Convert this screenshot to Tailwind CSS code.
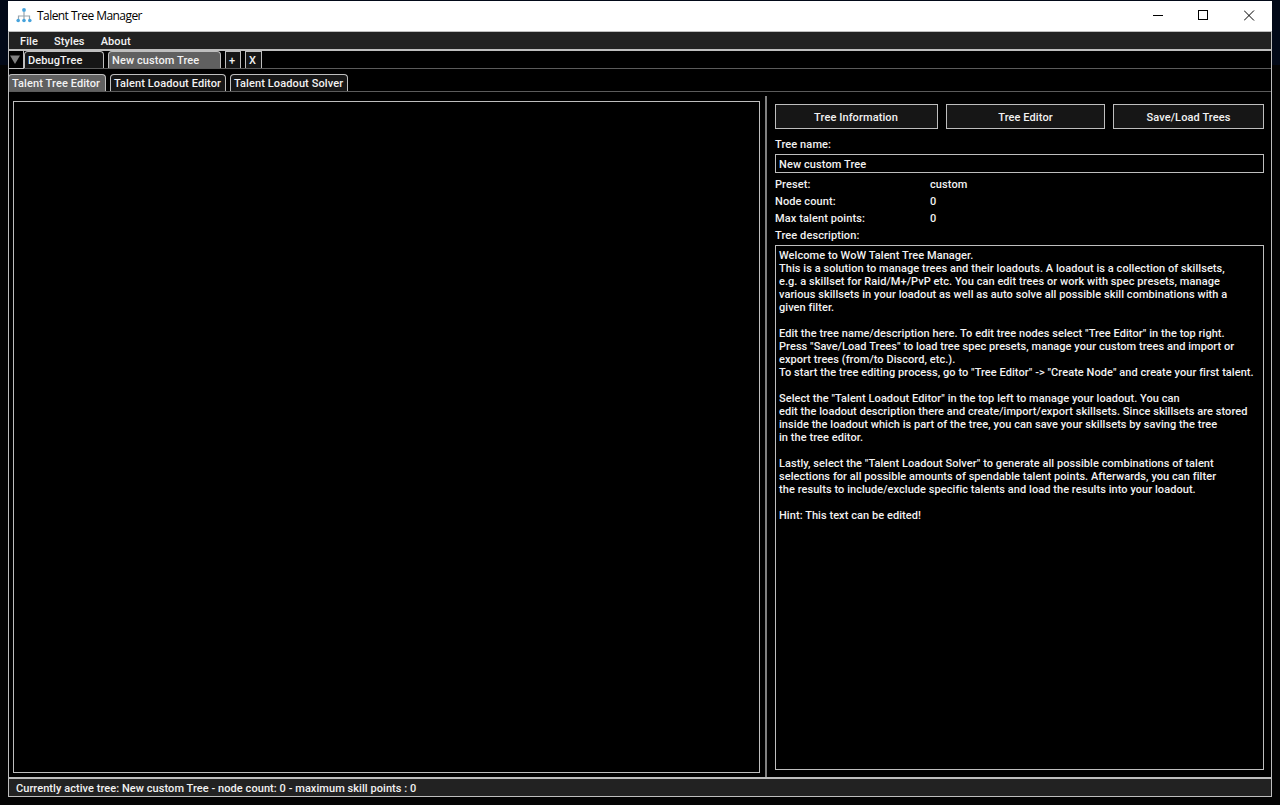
<!DOCTYPE html>
<html lang="en">
<head>
<meta charset="utf-8">
<title>Talent Tree Manager</title>
<script src="https://cdn.jsdelivr.net/npm/@tailwindcss/browser@4"></script>
</head>
<body class="h-[805px] w-[1280px] overflow-hidden bg-[#030304] bg-linear-to-b from-[#020918] from-[65px] to-[#040404] to-[65px] px-2 pt-px font-['Roboto',sans-serif] text-[11px] leading-[13px] font-medium tracking-[0.1px] text-[#f2f2f2]">
<div class="flex h-[796px] w-[1264px] flex-col bg-black">
  <header class="flex h-[30px] shrink-0 items-center bg-white text-black">
    <svg class="ml-2 size-4" viewBox="0 0 16 16" fill="none">
      <path d="M8 4v8M2.500 11V8h11v3" stroke="#9aa5ad" stroke-width="1.2"/>
      <g fill="#46a3dc"><circle cx="8" cy="2" r="1.900"/><circle cx="2.200" cy="12.500" r="1.800"/><circle cx="8" cy="12.500" r="1.800"/><circle cx="13.800" cy="12.500" r="1.800"/></g>
    </svg>
    <h1 class="ml-[5px] font-['Open_Sans','Noto_Sans',sans-serif] text-[12px] leading-4 font-normal tracking-[-0.56px]">Talent Tree Manager</h1>
    <div class="ml-auto flex items-center gap-[35px] pr-[17px] pb-px">
      <svg class="size-[11px]" viewBox="0 0 11 11" stroke="#000" fill="none" shape-rendering="crispEdges"><path d="M1 5.500h10"/></svg>
      <svg class="size-[11px]" viewBox="0 0 11 11" stroke="#000" fill="none" shape-rendering="crispEdges"><path d="M.5.5h9v9h-9z"/></svg>
      <svg class="size-[11px]" viewBox="0 0 11 11" stroke="#000" fill="none"><path d="M0 .5l10 10M10 .5l-10 10"/></svg>
    </div>
  </header>
  <div class="flex min-h-0 flex-1 flex-col border border-[#bebebe]">
    <nav class="flex h-[19px] shrink-0 gap-4 border-b-2 border-[#bebebe] bg-[#222] pt-[3px] pl-[11px]">
      <span>File</span><span>Styles</span><span>About</span>
    </nav>
    <div class="flex h-[18px] shrink-0 border-b border-[#5b5b5b]">
      <div class="flex h-[18px] w-[15px] justify-center border-r border-b border-[#bebebe] pt-1 pr-[3px]">
        <svg class="h-[9px] w-[10px] shrink-0" viewBox="0 0 10 9"><path d="M0 .5h10L5 9z" fill="#808080"/></svg>
      </div>
      <div class="h-[17px] w-20 rounded-t-[4px] border border-b-0 border-[#bebebe] bg-[#161616] pt-[2px] pl-[3px]">DebugTree</div>
      <div class="ml-1 h-[17px] w-[113px] rounded-t-[4px] border border-b-0 border-[#bebebe] bg-[#606060] pt-[2px] pl-[3px]">New custom Tree</div>
      <div class="ml-1 h-[17px] w-4 border border-b-0 border-[#bebebe] bg-[#161616] pt-[2px] pl-[3px]">+</div>
      <div class="ml-1 h-[17px] w-[17px] border border-b-0 border-[#bebebe] bg-[#161616] pt-[2px] pl-[3px]">X</div>
    </div>
    <div class="flex h-[23px] shrink-0 items-end border-b border-[#5b5b5b]">
      <div class="-ml-px h-[17px] w-[98px] rounded-t-[4px] border border-b-0 border-[#bebebe] bg-[#606060] pt-[2px] pl-[3px] whitespace-nowrap">Talent Tree Editor</div>
      <div class="ml-1 h-[17px] w-[116px] rounded-t-[4px] border border-b-0 border-[#bebebe] bg-[#161616] pt-[2px] pl-[3px] whitespace-nowrap">Talent Loadout Editor</div>
      <div class="ml-1 h-[17px] w-[118px] rounded-t-[4px] border border-b-0 border-[#bebebe] bg-[#161616] pt-[2px] pl-[3px] whitespace-nowrap">Talent Loadout Solver</div>
    </div>
    <main class="flex min-h-0 flex-1 pt-1">
      <section class="mt-[5px] mb-1 ml-1 w-[747px] shrink-0 border border-[#bebebe]"></section>
      <div class="ml-[5px] w-[2px] shrink-0 bg-[#808080]"></div>
      <aside class="mr-[7px] mb-[7px] ml-2 flex w-[489px] shrink-0 flex-col pt-2">
        <div class="flex justify-between text-center">
          <button class="h-[25px] w-[163px] border border-[#bebebe] bg-[#161616] pt-px pr-px">Tree Information</button>
          <button class="h-[25px] w-[159px] border border-[#bebebe] bg-[#161616] pt-px">Tree Editor</button>
          <button class="h-[25px] w-[151px] border border-[#bebebe] bg-[#161616] pt-px">Save/Load Trees</button>
        </div>
        <div class="mt-[9px]">Tree name:</div>
        <div class="mt-[3px] h-[19px] border border-[#bebebe] pt-[3px] pl-[3px]">New custom Tree</div>
        <dl class="mt-[5px] grid grid-cols-[155px_1fr] gap-y-1">
          <dt>Preset:</dt><dd>custom</dd>
          <dt>Node count:</dt><dd>0</dd>
          <dt>Max talent points:</dt><dd>0</dd>
          <dt>Tree description:</dt>
        </dl>
        <div class="mt-[3px] flex-1 border border-[#bebebe] pt-[3px] pl-[3px] tracking-[0.06px] whitespace-pre">Welcome to WoW Talent Tree Manager.
This is a solution to manage trees and their loadouts. A loadout is a collection of skillsets,
e.g. a skillset for Raid/M+/PvP etc. You can edit trees or work with spec presets, manage
various skillsets in your loadout as well as auto solve all possible skill combinations with a
given filter.

Edit the tree name/description here. To edit tree nodes select "Tree Editor" in the top right.
Press "Save/Load Trees" to load tree spec presets, manage your custom trees and import or
export trees (from/to Discord, etc.).
To start the tree editing process, go to "Tree Editor" -&gt; "Create Node" and create your first talent.

Select the "Talent Loadout Editor" in the top left to manage your loadout. You can
edit the loadout description there and create/import/export skillsets. Since skillsets are stored
inside the loadout which is part of the tree, you can save your skillsets by saving the tree
in the tree editor.

Lastly, select the "Talent Loadout Solver" to generate all possible combinations of talent
selections for all possible amounts of spendable talent points. Afterwards, you can filter
the results to include/exclude specific talents and load the results into your loadout.

Hint: This text can be edited!</div>
      </aside>
    </main>
    <footer class="h-[19px] shrink-0 border-t-2 border-[#bebebe] bg-[#222] pt-[3px] pl-[7px] tracking-[0.06px]">Currently active tree: New custom Tree - node count: 0 - maximum skill points : 0</footer>
  </div>
</div>
</body>
</html>
